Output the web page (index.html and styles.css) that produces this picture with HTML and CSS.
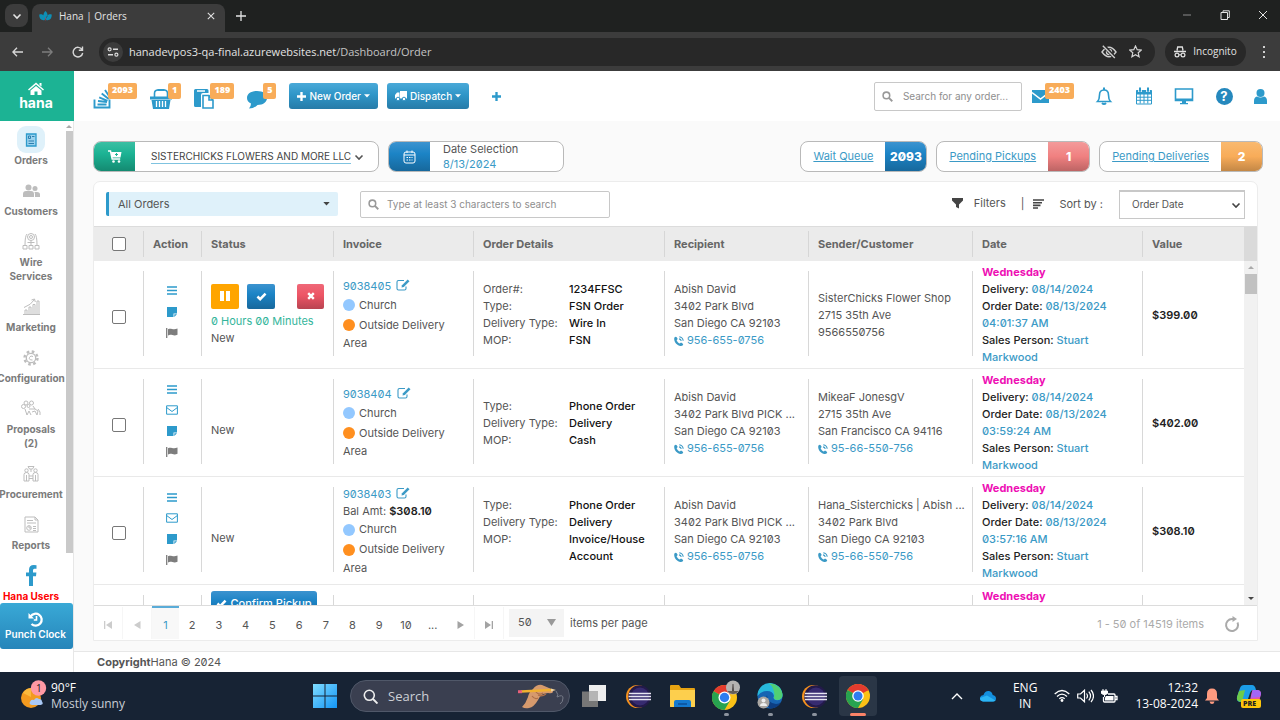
FILE: index.html
```html
<!DOCTYPE html>
<html lang="en">
<head>
<meta charset="utf-8">
<title>Hana | Orders</title>
<link rel="stylesheet" href="styles.css">
</head>
<body>
<svg class="sprite" aria-hidden="true">
  <symbol id="chev" viewBox="0 0 10 10"><path d="M1.500 3.500 5 7l3.500-3.500" fill="none" stroke="currentColor" stroke-width="1.600"/></symbol>
  <symbol id="caret" viewBox="0 0 8 5"><path d="M0 0h8L4 4.500z" fill="currentColor"/></symbol>
  <symbol id="cross" viewBox="0 0 10 10"><path d="M1 1l8 8M9 1 1 9" stroke="currentColor" stroke-width="1.300"/></symbol>
  <symbol id="plus" viewBox="0 0 10 10"><path d="M5 0v10M0 5h10" stroke="currentColor" stroke-width="2.600"/></symbol>
  <symbol id="plus-thin" viewBox="0 0 10 10"><path d="M5 0v10M0 5h10" stroke="currentColor" stroke-width="1.300"/></symbol>
  <symbol id="search" viewBox="0 0 12 12"><circle cx="4.800" cy="4.800" r="3.600" fill="none" stroke="currentColor" stroke-width="1.700"/><path d="M7.500 7.500 11.200 11.200" stroke="currentColor" stroke-width="2"/></symbol>
  <symbol id="check" viewBox="0 0 12 10"><path d="M1.500 5 4.500 8 10.500 1.800" fill="none" stroke="currentColor" stroke-width="2.800"/></symbol>
  <symbol id="times" viewBox="0 0 10 10"><path d="M1.500 1.500l7 7M8.500 1.500l-7 7" stroke="currentColor" stroke-width="3"/></symbol>
  <symbol id="bars" viewBox="0 0 10 9"><path d="M0 1h10M0 4.500h10M0 8h10" stroke="currentColor" stroke-width="1.400"/></symbol>
  <symbol id="note" viewBox="0 0 10 10"><path d="M0 0h10v6.500H6.500V10H0z" fill="currentColor"/><path d="M7.300 10V7.300H10z" fill="currentColor"/></symbol>
  <symbol id="mail-o" viewBox="0 0 12 10"><path d="M.6.800h10.800v8.400H.600zM.6 2.500 6 6.500l5.400-4" fill="none" stroke="currentColor"/></symbol>
  <symbol id="flag" viewBox="0 0 12 10"><path d="M.7 0v10" stroke="currentColor" stroke-width="1.300"/><path d="M2 1.200C5-.4 6.500 2.200 11.500.600v6.200C7 8.600 5.500 5.600 2 7.400z" fill="currentColor"/></symbol>
  <symbol id="edit" viewBox="0 0 14 12"><path d="M8 1.500H2.500Q1 1.500 1 3v6.500Q1 11 2.500 11h6q1.500 0 1.500-1.500V7.500" fill="none" stroke="currentColor" stroke-width="1.100"/><path d="M5.500 8.500 6 6.300 11.700.500l1.800 1.800L7.800 8z" fill="currentColor"/></symbol>
  <symbol id="phone" viewBox="0 0 10 10"><path d="M.4 1.600C2-.2 3 1.200 3.700 3L2.600 4.200C3.300 5.800 4.200 6.800 5.800 7.500L7 6.400c1.800.8 3 1.800 1.500 3.200C5 11.500-1 6.500.4 1.600z" fill="currentColor"/><path d="M5 2.900Q7 3.200 7.200 5M5.300.8Q8.800 1.300 9.200 4.800" fill="none" stroke="currentColor" stroke-width="1.100"/></symbol>
  <symbol id="calendar" viewBox="0 0 18 18"><path d="M1.500 3.500h15v13.500h-15zM1.500 7h15M1.500 10.200h15M1.500 13.300h15M5.200 7v9.500M9 7v9.500M12.800 7v9.500" fill="none" stroke="currentColor"/><path d="M1.500 3v4h15V3z" fill="currentColor"/><path d="M5 1v4M13 1v4" stroke="#fff" stroke-width="3.600"/><path d="M5 .5v4.300M13 .5v4.300" stroke="currentColor" stroke-width="2"/></symbol>
  <symbol id="eclipse" viewBox="0 0 25 25"><circle cx="11.500" cy="12.500" r="11.500" fill="#f5921e"/><circle cx="13.500" cy="12.500" r="11.300" fill="#231a4a"/><circle cx="14" cy="12.500" r="9" fill="#45378a" opacity=".6"/><path d="M3 9.500h22M2.500 12.500h22.500M3 15.500h22" stroke="#e8e6f2" stroke-width="1.700"/></symbol>
  <symbol id="chrome" viewBox="0 0 24 24"><circle cx="12" cy="12" r="12" fill="#fbc116"/><path d="M12 12 1.600 6A12 12 0 0 1 22.400 6z" fill="#e33b2e"/><path d="M12 12 1.600 6A12 12 0 0 0 12 24l5.200-9z" fill="#27a350"/><path d="M12 6.600h10.700l-.3-.6H12z" fill="#e33b2e"/><circle cx="12" cy="12" r="5.800" fill="#fff"/><circle cx="12" cy="12" r="4.500" fill="#2f7cf0"/></symbol>
</svg>

<header class="browser">
  <div class="tabs">
    <button class="tab-menu" aria-label="Search tabs"><svg width="10" height="10"><use href="#chev"/></svg></button>
    <div class="tab">
      <svg width="13" height="11" viewBox="0 0 13 11"><path d="M6.500 0C9.500 3 9 6 6.500 8 4 6 3.500 3 6.500 0zM.3 3.500C4 2.500 6 5 6 9 2.500 10 0 7.500.300 3.500zM12.700 3.500C9 2.500 7 5 7 9c3.500 1 6-1.500 5.700-5.500z" fill="#0e8fb5"/><path d="M6.500 6.500v3" stroke="#c23b50" stroke-width=".6"/></svg>
      <span class="tab-title">Hana | Orders</span>
      <button aria-label="Close tab"><svg width="8" height="8"><use href="#cross"/></svg></button>
    </div>
    <button class="new-tab" aria-label="New tab"><svg width="10" height="10"><use href="#plus-thin"/></svg></button>
    <div class="window-controls">
      <button aria-label="Minimize"><svg width="10" height="10" viewBox="0 0 10 10"><path d="M1 5h8" stroke="#8c8c8c"/></svg></button>
      <button aria-label="Restore"><svg width="10" height="10" viewBox="0 0 10 10"><path d="M1 2.500h6.500V9.500H1zM3 2.500V.800h6.300V7.500H7.500" fill="none" stroke="currentColor"/></svg></button>
      <button aria-label="Close"><svg width="10" height="10" viewBox="0 0 10 10"><path d="M1 1l8 8M9 1 1 9" stroke="currentColor"/></svg></button>
    </div>
  </div>
  <div class="address-row">
    <button aria-label="Back"><svg width="11" height="10" viewBox="0 0 11 10"><path d="M11 5H1M5 .8.900 5 5 9.200" fill="none" stroke="#d8d8d8" stroke-width="1.300"/></svg></button>
    <button aria-label="Forward"><svg width="11" height="10" viewBox="0 0 11 10"><path d="M0 5h10M6 .8 10.100 5 6 9.200" fill="none" stroke="#7d7d7d" stroke-width="1.300"/></svg></button>
    <button aria-label="Reload"><svg width="12" height="12" viewBox="0 0 12 12"><path d="M10 3.500A4.800 4.800 0 1 0 10.700 7M10.500.500V4.200H6.800" fill="none" stroke="#d8d8d8" stroke-width="1.400"/></svg></button>
    <div class="address">
      <span class="site-info"><svg width="12" height="10" viewBox="0 0 12 10"><path d="M6 2.300h5M1 7.700h5" stroke="#ddd" stroke-width="1.400"/><circle cx="2.600" cy="2.300" r="1.500" fill="none" stroke="#ddd" stroke-width="1.200"/><circle cx="9.400" cy="7.700" r="1.500" fill="none" stroke="#ddd" stroke-width="1.200"/></svg></span>
      <span class="url">hanadevpos3-qa-final.azurewebsites.net<i>/Dashboard/Order</i></span>
      <svg width="16" height="14" viewBox="0 0 16 14"><path d="M1 7Q8-2.500 15 7 8 16.500 1 7z" fill="none" stroke="#cfcfcf" stroke-width="1.400"/><circle cx="8" cy="7" r="2.500" fill="none" stroke="#cfcfcf" stroke-width="1.400"/><path d="M2.500.500 14 13" stroke="#282828" stroke-width="3.500"/><path d="M1.800.800 13.800 13" stroke="#cfcfcf" stroke-width="1.400"/></svg>
      <svg width="13" height="13" viewBox="0 0 13 13"><path d="M6.500 1l1.700 3.700 4 .4-3 2.700.9 4L6.500 9.700l-3.600 2.100.9-4-3-2.700 4-.4z" fill="none" stroke="#d4d4d4" stroke-width="1.200"/></svg>
    </div>
    <button class="incognito"><svg width="12" height="12" viewBox="0 0 12 12"><path d="M3 4.500 3.700 1h4.600L9 4.500M0 5.500h12" fill="none" stroke="#e0e0e0" stroke-width="1.300"/><circle cx="3" cy="9" r="1.900" fill="none" stroke="#e0e0e0" stroke-width="1.200"/><circle cx="9" cy="9" r="1.900" fill="none" stroke="#e0e0e0" stroke-width="1.200"/><path d="M5 8.800h2" stroke="#e0e0e0"/></svg>Incognito</button>
    <button class="more" aria-label="Menu"><svg width="4" height="12" viewBox="0 0 4 12"><path d="M1 0h2v2H1zM1 5h2v2H1zM1 10h2v2H1z" fill="#d0d0d0"/></svg></button>
  </div>
</header>

<div class="app">
  <aside class="sidebar">
    <a class="logo" href="#"><svg width="16" height="13" viewBox="0 0 16 13"><path d="M8 .5 16 7.400l-1 1.100L8 2.600 1 8.500 0 7.400z" fill="#fff"/><path d="M11.500 1h2v3.500l-2-1.500zM8 4l5.500 4.600V13H9.500V9.500h-3V13h-4V8.600z" fill="#fff"/></svg>hana</a>
    <div class="nav-wrap">
      <nav class="nav">
        <a class="active" href="#"><span class="ico"><svg width="12" height="14" viewBox="0 0 12 14"><path d="M1.500 1h9.500v12H1.500z" fill="#9ad2ee" stroke="#2d9acb" stroke-width="1.300"/><path d="M3.500 3h2v2.500h-2zM7 3.500h2.500M3.500 8h5.500M3.500 10.500h5.500" fill="none" stroke="#2d7fae"/></svg></span>Orders</a>
        <a href="#"><span class="ico"><svg width="17" height="14" viewBox="0 0 17 14"><g fill="#bdbdbd"><circle cx="5.500" cy="3.500" r="3"/><circle cx="12" cy="4.500" r="2.500"/><path d="M0 13V10q0-3 3-3h5q3 0 3 3v3zM12 13v-3q0-1.200-.6-2H14q3 0 3 2.500V13z"/></g></svg></span>Customers</a>
        <a href="#"><span class="ico"><svg width="18" height="17" viewBox="0 0 18 17"><g fill="none" stroke="#bdbdbd"><circle cx="9" cy="4" r="3.500"/><circle cx="9" cy="4" r="1.500"/><path d="M5 1Q3 3 3 12M13 1q2 2 2 11M9 7.500V12M1 12.500h4v3.500H1zM7 12.500h4v3.500H7zM13 12.500h4v3.500h-4zM5.500 9.500h7"/></g></svg></span>Wire<br>Services</a>
        <a href="#"><span class="ico"><svg width="17" height="17" viewBox="0 0 17 17"><path d="M0 16.500h17M2 16v-4h2v4M6 16V9h2v7M10 16V6.500h2V16M14 16V3h2v13M1 9.500Q8 7 11.500 1.500M8.500 2l3-1 .8 3" fill="none" stroke="#bdbdbd"/></svg></span>Marketing</a>
        <a href="#"><span class="ico"><svg width="16" height="16" viewBox="0 0 16 16"><circle cx="8" cy="8" r="6.500" fill="none" stroke="#bdbdbd" stroke-width="2.400" stroke-dasharray="2.600 2.500"/><circle cx="8" cy="8" r="4.700" fill="none" stroke="#bdbdbd" stroke-width="1.300"/><path d="M10 6.500Q7.500 5 6.500 7.500t3 2.500" fill="none" stroke="#bdbdbd"/></svg></span>Configuration</a>
        <a href="#"><span class="ico"><svg width="20" height="17" viewBox="0 0 20 17"><g fill="none" stroke="#bdbdbd"><circle cx="5" cy="3" r="2"/><circle cx="10.500" cy="3" r="2"/><circle cx="2.500" cy="6.500" r="2"/><circle cx="7.500" cy="6" r="1.500"/><path d="M4 9l2 6 2-4 2 4M8 9h6l3 2-1 4-2-4-3 1M17 9l2 3v3M12 6l2 3"/></g></svg></span>Proposals<br>(2)</a>
        <a href="#"><span class="ico"><svg width="16" height="17" viewBox="0 0 16 17"><g fill="none" stroke="#bdbdbd"><path d="M5 1.500h6L9.500 4h-3zM8 4v3M1 16V9.500q0-2 2.500-2T6 9.500V16zM10 16V9.500q0-2 2.500-2t2.500 2V16zM6 11h4M6 13.500h4M3.500 10v6M12.500 10v6"/><circle cx="3.500" cy="5.500" r="1.700"/><circle cx="12.500" cy="5.500" r="1.700"/></g></svg></span>Procurement</a>
        <a href="#"><span class="ico"><svg width="15" height="17" viewBox="0 0 15 17"><path d="M1 1h10l3 3v12H1zM11 1v3h3M3 4.500h6M3 7h9M9 10.500h3M9 12.500h3M9 14.500h3" fill="none" stroke="#bdbdbd"/><circle cx="5" cy="12" r="2.300" fill="none" stroke="#bdbdbd"/><path d="M5 9.500V12h2" fill="none" stroke="#bdbdbd"/></svg></span>Reports</a>
        <a class="fb" href="#"><span class="ico"><svg width="11" height="21" viewBox="0 0 11 21"><path d="M10.500.200V3.800H8.300Q7 3.800 7 5.300V7.500h3.400L10 11.200H7V21H3V11.200H0V7.500h3V4.800Q3 .1 7.800.100z" fill="#2d9acb"/></svg></span>Hana Users</a>
      </nav>
      <div class="nav-scroll"><span class="up"></span><span class="thumb"></span></div>
    </div>
    <button class="punch"><svg width="16" height="15" viewBox="0 0 16 15"><path d="M2.600 4.500A6 6 0 1 1 3.500 12" fill="none" stroke="#fff" stroke-width="2.300"/><path d="M.5 1v5.500H6z" fill="#fff"/><path d="M8.500 4v4H5.800" fill="none" stroke="#fff" stroke-width="1.600"/></svg>Punch Clock</button>
  </aside>

  <div class="page">
    <div class="topbar">
      <a class="counter" href="#"><svg width="19" height="22" viewBox="0 0 19 22"><path d="M1.500 12.500v8h15v-8M4.500 17.500h9M5 14l9 1M6.200 10.300l8.300 3.500M8.700 6.500l7 5.500M12 3l5 7.500" fill="none" stroke="#2d9acb" stroke-width="1.900"/></svg><b>2093</b></a>
      <a class="counter" href="#"><svg width="22" height="21" viewBox="0 0 22 21"><path d="M4.500 9V5.500Q4.500 2 8 2h6q3.500 0 3.500 3.500V9" fill="none" stroke="#2d9acb" stroke-width="1.600"/><path d="M7.500 1h7v2h-7zM0 8.500h22v3H0zM1.500 12h19L19 21H3z" fill="#2d9acb"/><path d="M6.500 13v6M9.500 13v6M12.500 13v6M15.500 13v6" stroke="#fff" stroke-width="1.300"/></svg><b>1</b></a>
      <a class="counter" href="#"><svg width="20" height="21" viewBox="0 0 20 21"><path d="M0 2.500Q0 1 1.500 1H13q1.500 0 1.500 1.500V5H9Q7 5 7 7v12H1.500Q0 19 0 17.500z" fill="#2d9acb"/><path d="M3 3h8" stroke="#fff" stroke-width="1.500"/><path d="M9 7.500h6l4 4.500v8H9zM15 7.500V12h4" fill="#fff" stroke="#2d9acb" stroke-width="1.600"/></svg><b>189</b></a>
      <a class="counter" href="#"><svg width="20" height="19" viewBox="0 0 20 19"><path d="M10 1c6 0 10 2.800 10 7s-4 7-9.500 7Q7 18.500 2 18.500 4 16.500 4 13.500 0 11.500 0 8c0-4.200 4-7 10-7z" fill="#2d9acb"/></svg><b>5</b></a>
      <button class="btn"><svg width="9" height="9"><use href="#plus"/></svg>New Order<svg width="6" height="4"><use href="#caret"/></svg></button>
      <button class="btn"><svg width="12" height="10" viewBox="0 0 12 10"><path d="M5 0h7v7.500H5zM0 7.500V4l2-2.500h2.500v6z" fill="#fff"/><circle cx="3" cy="8" r="1.800" fill="#fff" stroke="#3192c4"/><circle cx="9" cy="8" r="1.800" fill="#fff" stroke="#3192c4"/></svg>Dispatch<svg width="6" height="4"><use href="#caret"/></svg></button>
      <button class="add" aria-label="Add"><svg width="9" height="9"><use href="#plus"/></svg></button>
      <label class="box-search top-search"><svg width="11" height="11"><use href="#search"/></svg><input type="text" aria-label="Search orders" placeholder="Search for any order..."></label>
      <a class="counter mail" href="#"><svg width="17" height="13" viewBox="0 0 17 13"><path d="M0 0h17v13H0z" fill="#2d9acb"/><path d="M0 2.500 8.500 9 17 2.500" fill="none" stroke="#fff" stroke-width="1.500"/></svg><b>2403</b></a>
      <div class="tools">
        <a href="#" aria-label="Alerts"><svg width="18" height="18" viewBox="0 0 18 18"><path d="M2.500 14.500Q4.500 12.500 4.500 8 4.500 3 9 3t4.500 5q0 4.500 2 6.500z" fill="none" stroke="currentColor" stroke-width="1.600"/><path d="M9 .5V3M7 16q2 2 4 0" stroke="currentColor" stroke-width="2" fill="none"/></svg></a>
        <a href="#" aria-label="Calendar"><svg width="18" height="18"><use href="#calendar"/></svg></a>
        <a href="#" aria-label="Screen"><svg width="20" height="18" viewBox="0 0 20 18"><path d="M1.500 2h17v11.500h-17z" fill="none" stroke="currentColor" stroke-width="1.600"/><path d="M1 11.500h18V14H1zM8 14h4v2h2v1.200H6V16h2z" fill="currentColor"/></svg></a>
        <a class="help" href="#" aria-label="Help">?</a>
        <a href="#" aria-label="Account"><svg width="13" height="15" viewBox="0 0 13 15"><circle cx="6.500" cy="4" r="4" fill="currentColor"/><path d="M0 15v-3q0-4 3-4.500 3.500 2 7 0 3 .5 3 4.500v3z" fill="currentColor"/></svg></a>
      </div>
    </div>

    <main class="content">
      <div class="pills">
        <div class="pill shop"><span class="cap green"><svg width="14" height="13" viewBox="0 0 14 13"><path d="M0 1h2.500l1.700 8h8" fill="none" stroke="#fff" stroke-width="1.500"/><path d="M3 2h10.500L12.500 7.500H4z" fill="#fff"/><path d="M8.500 3v3M7 4.500h3" stroke="#1cb394"/><circle cx="5.500" cy="11.500" r="1.300" fill="#fff"/><circle cx="11" cy="11.500" r="1.300" fill="#fff"/></svg></span><a href="#">SISTERCHICKS FLOWERS AND MORE LLC</a><svg width="10" height="10"><use href="#chev"/></svg></div>
        <div class="pill date"><span class="cap blue"><svg width="13" height="14" viewBox="0 0 13 14"><rect x="1" y="2" width="11" height="11" rx="2" fill="none" stroke="#fff"/><path d="M1 5h11M4 .5V3M9 .5V3" stroke="#fff"/><path d="M3.500 7.500h6M3.500 10h6" stroke="#fff" stroke-dasharray="1.500 1"/></svg></span><div class="date-text"><span>Date Selection</span><a href="#">8/13/2024</a></div></div>
        <div class="pill count wait"><a href="#">Wait Queue</a><b class="blue">2093</b></div>
        <div class="pill count"><a href="#">Pending Pickups</a><b class="red">1</b></div>
        <div class="pill count"><a href="#">Pending Deliveries</a><b class="amber">2</b></div>
      </div>

      <section class="card">
        <div class="filters">
          <div class="select all"><select aria-label="Order view"><option>All Orders</option></select><svg width="7" height="4"><use href="#caret"/></svg></div>
          <label class="box-search list-search"><svg width="11" height="11"><use href="#search"/></svg><input type="text" aria-label="Search list" placeholder="Type at least 3 characters to search"></label>
          <button class="filter"><svg width="11" height="11" viewBox="0 0 11 11"><path d="M0 0h11v2.500L7 6.500v4L4 9V6.500L0 2.500z" fill="#444"/></svg>Filters</button>
          <span class="bar">|</span>
          <svg width="11" height="10" viewBox="0 0 11 10"><path d="M0 1h11M0 3.700h9M0 6.400h7.500M0 9h5" stroke="#444" stroke-width="1.600"/></svg>
          <label class="sort-label" for="sort">Sort by :</label>
          <div class="select sort"><select id="sort"><option>Order Date</option></select><svg width="10" height="10"><use href="#chev"/></svg></div>
        </div>

        <div class="grid">
          <div class="grid-view">
          <table>
            <colgroup><col class="c-check"><col class="c-action"><col class="c-status"><col class="c-invoice"><col class="c-details"><col class="c-recipient"><col class="c-sender"><col class="c-date"><col></colgroup>
            <thead><tr><th><input type="checkbox" aria-label="Select all"></th><th>Action</th><th>Status</th><th>Invoice</th><th>Order Details</th><th>Recipient</th><th>Sender/Customer</th><th>Date</th><th>Value</th></tr></thead>
            <tbody>
              <tr>
                <td><input type="checkbox" aria-label="Select 9038405"></td>
                <td><div class="actions three"><svg width="10" height="9"><use href="#bars"/></svg><svg width="10" height="10"><use href="#note"/></svg><svg class="grey" width="12" height="10"><use href="#flag"/></svg></div></td>
                <td><div class="status-btns"><button class="pause" aria-label="Pause"><svg width="10" height="10" viewBox="0 0 10 10"><path d="M0 0h4v10H0zM6 0h4v10H6z" fill="#fff"/></svg></button><button class="blue" aria-label="Confirm"><svg width="11" height="9"><use href="#check"/></svg></button><button class="cancel" aria-label="Cancel"><svg width="8" height="8"><use href="#times"/></svg></button></div><div class="timer">0 Hours 00 Minutes</div>New</td>
                <td><a href="#">9038405 <svg class="edit" width="14" height="12"><use href="#edit"/></svg></a><div class="tag"><i class="dot sky"></i>Church</div><div class="tag"><i class="dot orange"></i>Outside Delivery</div>Area</td>
                <td><dl><dt>Order#:</dt><dd>1234FFSC</dd><dt>Type:</dt><dd>FSN Order</dd><dt>Delivery Type:</dt><dd>Wire In</dd><dt>MOP:</dt><dd>FSN</dd></dl></td>
                <td>Abish David<br>3402 Park Blvd<br>San Diego CA 92103<br><a href="#"><svg class="phone" width="10" height="10"><use href="#phone"/></svg>956-655-0756</a></td>
                <td>SisterChicks Flower Shop<br>2715 35th Ave<br>9566550756</td>
                <td class="when"><b>Wednesday</b>Delivery: <a href="#">08/14/2024</a><br>Order Date: <a href="#">08/13/2024<br>04:01:37 AM</a><br>Sales Person: <a href="#">Stuart<br>Markwood</a></td>
                <td class="value">$399.00</td>
              </tr>
              <tr>
                <td><input type="checkbox" aria-label="Select 9038404"></td>
                <td><div class="actions"><svg width="10" height="9"><use href="#bars"/></svg><svg width="12" height="10"><use href="#mail-o"/></svg><svg width="10" height="10"><use href="#note"/></svg><svg class="grey" width="12" height="10"><use href="#flag"/></svg></div></td>
                <td class="plain">New</td>
                <td><a href="#">9038404 <svg class="edit" width="14" height="12"><use href="#edit"/></svg></a><div class="tag"><i class="dot sky"></i>Church</div><div class="tag"><i class="dot orange"></i>Outside Delivery</div>Area</td>
                <td><dl><dt>Type:</dt><dd>Phone Order</dd><dt>Delivery Type:</dt><dd>Delivery</dd><dt>MOP:</dt><dd>Cash</dd></dl></td>
                <td>Abish David<br>3402 Park Blvd PICK ...<br>San Diego CA 92103<br><a href="#"><svg class="phone" width="10" height="10"><use href="#phone"/></svg>956-655-0756</a></td>
                <td>MikeaF JonesgV<br>2715 35th Ave<br>San Francisco CA 94116<br><a href="#"><svg class="phone" width="10" height="10"><use href="#phone"/></svg>95-66-550-756</a></td>
                <td class="when"><b>Wednesday</b>Delivery: <a href="#">08/14/2024</a><br>Order Date: <a href="#">08/13/2024<br>03:59:24 AM</a><br>Sales Person: <a href="#">Stuart<br>Markwood</a></td>
                <td class="value">$402.00</td>
              </tr>
              <tr>
                <td><input type="checkbox" aria-label="Select 9038403"></td>
                <td><div class="actions"><svg width="10" height="9"><use href="#bars"/></svg><svg width="12" height="10"><use href="#mail-o"/></svg><svg width="10" height="10"><use href="#note"/></svg><svg class="grey" width="12" height="10"><use href="#flag"/></svg></div></td>
                <td class="plain">New</td>
                <td><a href="#">9038403 <svg class="edit" width="14" height="12"><use href="#edit"/></svg></a><div>Bal Amt: <strong>$308.10</strong></div><div class="tag"><i class="dot sky"></i>Church</div><div class="tag"><i class="dot orange"></i>Outside Delivery</div>Area</td>
                <td><dl><dt>Type:</dt><dd>Phone Order</dd><dt>Delivery Type:</dt><dd>Delivery</dd><dt>MOP:</dt><dd>Invoice/House Account</dd></dl></td>
                <td>Abish David<br>3402 Park Blvd PICK ...<br>San Diego CA 92103<br><a href="#"><svg class="phone" width="10" height="10"><use href="#phone"/></svg>956-655-0756</a></td>
                <td>Hana_Sisterchicks | Abish ...<br>3402 Park Blvd<br>San Diego CA 92103<br><a href="#"><svg class="phone" width="10" height="10"><use href="#phone"/></svg>95-66-550-756</a></td>
                <td class="when"><b>Wednesday</b>Delivery: <a href="#">08/14/2024</a><br>Order Date: <a href="#">08/13/2024<br>03:57:16 AM</a><br>Sales Person: <a href="#">Stuart<br>Markwood</a></td>
                <td class="value">$308.10</td>
              </tr>
              <tr class="next-row">
                <td></td><td></td><td><button class="confirm blue"><svg width="11" height="9"><use href="#check"/></svg>Confirm Pickup</button></td><td></td><td></td><td></td><td></td><td class="when"><b>Wednesday</b></td><td></td>
              </tr>
            </tbody>
          </table>
          </div>
          <div class="grid-scroll"><span class="corner"></span><span class="up"></span><span class="thumb"></span><span class="down"></span></div>
        </div>

        <div class="pager">
          <button class="step" aria-label="First page"><svg width="8" height="8" viewBox="0 0 8 8"><path d="M0 0h1.300v8H0zM8 0v8L2 4z" fill="#ccc"/></svg></button>
          <button class="step" aria-label="Previous page"><svg width="7" height="8" viewBox="0 0 7 8"><path d="M6.500 0v8L0 4z" fill="#ccc"/></svg></button>
          <div class="pages"><button class="current">1</button><button>2</button><button>3</button><button>4</button><button>5</button><button>6</button><button>7</button><button>8</button><button>9</button><button>10</button><button>...</button></div>
          <button class="step" aria-label="Next page"><svg width="7" height="8" viewBox="0 0 7 8"><path d="M.5 0v8L7 4z" fill="#a3a3a3"/></svg></button>
          <button class="step" aria-label="Last page"><svg width="8" height="8" viewBox="0 0 8 8"><path d="M6.700 0H8v8H6.700zM0 0v8l6-4z" fill="#a3a3a3"/></svg></button>
          <div class="select size"><select id="size"><option>50</option></select><svg width="9" height="7" viewBox="0 0 9 7"><path d="M0 0h9L4.500 7z" fill="#999"/></svg></div>
          <label for="size">items per page</label>
          <span class="range">1 - 50 of 14519 items</span>
          <button class="refresh" aria-label="Refresh"><svg width="16" height="17" viewBox="0 0 16 17"><path d="M9.500 3H8a6 6 0 1 0 5.500 3.500" fill="none" stroke="#aaa" stroke-width="2"/><path d="M8.500 0 13 3 8.500 6z" fill="#aaa"/></svg></button>
        </div>
      </section>
    </main>
    <footer class="footer"><b>Copyright</b>Hana © 2024</footer>
  </div>
</div>

<div class="taskbar">
  <div class="weather">
    <svg width="28" height="30" viewBox="0 0 28 30"><circle cx="11" cy="18" r="10" fill="#f39a1f"/><path d="M3 13a10 10 0 0 1 8-5v9z" fill="#fbb93c"/><path d="M12 25q-4-1-1.500-4 1-2 3.500-1 2-3.500 5-1 3-.5 3 2.500 2 3-1.500 3.500z" fill="#a9c8f5"/><circle cx="18.500" cy="8" r="7.700" fill="#ff99a4"/><text x="16" y="12" class="badge-text">1</text></svg>
    <div>90°F<span>Mostly sunny</span></div>
  </div>
  <div class="dock">
    <button aria-label="Start"><svg width="24" height="24" viewBox="0 0 24 24"><defs><linearGradient id="win" x1="0" y1="0" x2="1" y2="1"><stop offset="0" stop-color="#7fdcff"/><stop offset="1" stop-color="#1395f5"/></linearGradient></defs><path d="M0 0h11.500v11.500H0zM12.500 0H24v11.500H12.500zM0 12.500h11.500V24H0zM12.500 12.500H24V24H12.500z" fill="url(#win)"/></svg></button>
    <label class="os-search"><svg width="15" height="15" viewBox="0 0 15 15"><circle cx="6.300" cy="6.300" r="5" fill="none" stroke="#eee" stroke-width="1.600"/><path d="M10 10l4.500 4.500" stroke="#eee" stroke-width="1.900"/></svg><input type="text" aria-label="Search" placeholder="Search"><svg width="46" height="26" viewBox="0 0 46 26"><path d="M4 24Q8 20 10 14q1-5 5-8 4-5 9-4l7 3q4 1 4 4-1 2-5 1l-5 1q-3 2-5 6-4 7-9 8-4 1-7-1z" fill="#d69a6d"/><path d="M17 8q4 5 8 2M20 12q4 2 8-1M14 13q3 4 6 2" fill="none" stroke="#ad6f48" stroke-width="1.200"/><path d="M3 8.500 33 7" stroke="#f0b030" stroke-width="2.500"/><path d="M0 8.700h4" stroke="#e8607a" stroke-width="3"/><path d="M33 5.500 38 7l-5 1.500z" fill="#f0d3a0"/><path d="M38 8q3 4 1 6 6-3 6 1t-3 6" fill="none" stroke="#777c88"/></svg></label>
    <button aria-label="Task view"><svg width="24" height="23" viewBox="0 0 24 23"><path d="M7 0h17v16H7z" fill="#eee"/><path d="M0 6.500h16V22H0z" fill="#777"/><path d="M7 6.500h9V16H7z" fill="#b5b5b5"/></svg></button>
    <button aria-label="Eclipse"><svg width="25" height="25"><use href="#eclipse"/></svg></button>
    <button aria-label="Files"><svg width="25" height="24" viewBox="0 0 25 24"><path d="M0 2Q0 1 1 1h8l2 3h13q1 0 1 1v18H0z" fill="#e6a312"/><path d="M0 6h25v16q0 1-1 1H1q-1 0-1-1z" fill="#fdcf4d"/><path d="M4 23v-5q0-2 2-2h13q2 0 2 2v5z" fill="#1479cf"/><path d="M8 20h9" stroke="#0b4f99" stroke-width="1.500"/></svg></button>
    <button class="running" aria-label="Chrome profile"><svg width="30" height="32" viewBox="0 0 30 32"><use href="#chrome" x="1" y="5" width="25" height="25"/><circle cx="22" cy="7.500" r="7" fill="#b5b3b2"/><path d="M16.500 11h11q-2 3-5.500 3t-5.500-3z" fill="#655e58"/><path d="M21 11l.5-7h1l.5 7z" fill="#514b4a"/></svg></button>
    <button class="running" aria-label="Edge"><svg width="26" height="26" viewBox="0 0 26 26"><circle cx="13" cy="13" r="12.500" fill="#1765b3"/><path d="M.5 13A12.500 12.500 0 0 1 25.500 12q0 6-7 5-3-1-1.500-4-1-5-7-5-6 0-9.500 5z" fill="#27b9dc"/><path d="M12 .6A12.500 12.500 0 0 1 25.500 12q0 5-6 5-4-1-2-4Q17 4 12 .6z" fill="#50cf74"/><path d="M10 12q0 8 9 9 3 0 5-2-3 6.500-11 6.500-7-5-3-13.500z" fill="#0d3e83"/><circle cx="6.500" cy="19.500" r="6" fill="#aaa6a2"/><circle cx="6.500" cy="17.500" r="2" fill="#eee"/><path d="M3 23q0-3 3.500-3t3.500 3z" fill="#eee"/></svg></button>
    <button class="running" aria-label="Eclipse workspace"><svg width="25" height="25"><use href="#eclipse"/></svg></button>
    <button class="open" aria-label="Chrome"><svg width="24" height="24"><use href="#chrome"/></svg></button>
  </div>
  <div class="tray">
    <svg width="12" height="12" viewBox="0 0 12 12"><path d="M1 9l5-5 5 5" fill="none" stroke="#fff" stroke-width="1.400"/></svg>
    <svg width="16" height="12" viewBox="0 0 16 12"><path d="M3 11.500Q-.5 11-.1 8 .5 5 3.500 5 5 .5 9 1q3 .5 3.700 4Q16 5.500 16 8.500q0 3-3 3z" fill="#1490df"/><path d="M3 11.500Q0 11 .100 8L7 5.500l8.500 5q-1 1-2.500 1z" fill="#2cb5f4"/></svg>
    <div class="lang">ENG<br>IN</div>
    <div class="system">
      <svg width="16" height="13" viewBox="0 0 16 13"><path d="M.7 5Q8-2 15.300 5M3 7.500Q8 2.800 13 7.500M5.300 9.800Q8 7.500 10.700 9.800" fill="none" stroke="#fff" stroke-width="1.300"/><circle cx="8" cy="11.500" r="1.400" fill="#fff"/></svg>
      <svg width="17" height="14" viewBox="0 0 17 14"><path d="M.7 5H3.500L7.500 1.200v11.600L3.500 9H.700zM9.500 4.500q2 2.500 0 5M11.800 2.700q3.500 4.300 0 8.600M14 1q5 6 0 12" fill="none" stroke="#fff" stroke-width="1.200"/></svg>
      <svg width="17" height="15" viewBox="0 0 17 15"><path d="M2.500 8v4q0 1 1 1H13q1 0 1-1V6q0-1-1-1H7M14.500 7.500H16v3h-1.500" fill="none" stroke="#fff" stroke-width="1.300"/><path d="M5 7h7.500v4.500H4V8.500z" fill="#fff"/><path d="M2 0v2M5 0v2M.5 2h6v2.500Q3.500 7 .5 4.500zM3.500 5.500V8" fill="#fff" stroke="#fff"/></svg>
    </div>
    <div class="clock">12:32<br>13-08-2024</div>
    <svg width="14" height="16" viewBox="0 0 14 16"><path d="M0 12.500 2 10V6q0-5.500 5-5.500T12 6v4l2 2.500zM4.500 13.500h5Q9 16 7 16t-2.500-2.500z" fill="#ff9b80"/></svg>
    <svg width="26" height="26" viewBox="0 0 26 26"><path d="M8 2h8q3 0 4 5h-3q-2 0-3 3l-3 9H5q-5 0-4-5L4 5q1-3 4-3z" fill="#1b9de8"/><path d="M3 8l6-1-3 12q-6 0-5-5z" fill="#6ecb49"/><path d="M17 7h4q4 0 4 4l-2 8q-1 3-4 3h-9q3-1 4-5l1.500-7Q16 7 17 7z" fill="#e455a7"/><path d="M17 7h4q4 0 4 4l-1 3-9 1 1-5q0-3 1-3z" fill="#a366f5"/><rect x="5" y="16" width="20" height="9" rx="2" fill="#fdc60b"/><text x="7" y="23" class="pre">PRE</text></svg>
  </div>
</div>
</body>
</html>
```

FILE: styles.css
```css
* { box-sizing: border-box; }
body {
  margin: 0;
  height: 100vh;
  display: flex;
  flex-direction: column;
  overflow: hidden;
  font: 11px/17px Inter, "Liberation Sans", sans-serif;
  font-feature-settings: "zero";
  color: #555;
  background: #fafafa;
}
button, input, select { font: inherit; color: inherit; font-feature-settings: inherit; }
button { border: 0; padding: 0; background: none; display: flex; align-items: center; justify-content: center; }
a { color: #3b9ac6; text-decoration: none; }
svg { flex: none; display: block; }
.sprite { position: absolute; width: 0; height: 0; }

/* Browser frame */
.browser { flex: none; font-family: "Open Sans", sans-serif; font-size: 10px; font-feature-settings: normal; color: #e3e3e3; background: #3c3c3c; }
.tabs { height: 32px; display: flex; align-items: flex-start; background: #1f2120; }
.tab-menu { width: 23px; height: 23px; margin: 4px 4px 4px 5px; border-radius: 8px; background: #3c3c3c; }
.tab { width: 193px; height: 28px; margin-top: 4px; padding: 0 10px 4px 7px; display: flex; align-items: center; gap: 7px; border-radius: 8px 8px 0 0; background: #3c3c3c; }
.tab-title { flex: 1; }
.new-tab { width: 32px; height: 31px; }
.window-controls { margin-left: auto; padding-right: 12px; height: 30px; display: flex; gap: 28px; }
.address-row { height: 39px; display: flex; align-items: center; padding: 0 14px 0 12px; gap: 19px; }
.address { flex: 1; height: 28px; margin-left: -4px; margin-right: -9px; padding: 0 13px 0 4px; display: flex; align-items: center; gap: 12px; border-radius: 14px; background: #282828; }
.site-info { width: 20px; height: 20px; margin-right: -6px; border-radius: 10px; background: #3c3c3c; display: flex; align-items: center; justify-content: center; }
.url { flex: 1; font-size: 11px; }
.url i { font-style: normal; color: #c4c4c4; }
.incognito { width: 81px; height: 28px; gap: 7px; margin-right: -3px; border-radius: 14px; background: #282828; }

/* Shell */
.app { flex: 1; min-height: 0; display: flex; }
.sidebar { width: 74px; flex: none; display: flex; flex-direction: column; background: #fff; border-right: 1px solid #e7e7e7; }
.logo { height: 50px; display: flex; flex-direction: column; align-items: center; justify-content: center; background: #1cb394; color: #fff; font: bold 14px/15px Inter, sans-serif; margin-right: -1px; padding-right: 2px; }
.nav-wrap { flex: 1; min-height: 0; display: flex; overflow: hidden; }
.nav { flex: 1; min-width: 0; padding: 5px 0 0; display: flex; flex-direction: column; gap: 9px; overflow: hidden; }
.nav a { display: flex; flex-direction: column; align-items: center; flex: none; width: 62px; text-align: center; font-weight: 700; font-size: 10px; line-height: 14px; color: #7b7b7b; }
.ico { width: 28px; height: 27px; display: flex; align-items: center; justify-content: center; border-radius: 9px; margin-bottom: 0; }
.nav a { padding-bottom: 1px; }
.active .ico { background: #dff1fa; }
.nav .fb { color: #f00; white-space: nowrap; }
.nav-scroll { width: 8px; display: flex; flex-direction: column; align-items: center; padding-top: 4px; gap: 3px; }
.nav-scroll .thumb { width: 7px; height: 422px; background: #c9c9c9; }
.up { border: 3px solid transparent; border-top: 0; border-bottom-color: #aaa; }
.down { border: 3px solid transparent; border-bottom: 0; border-top-color: #444; }
.punch { height: 46px; margin-bottom: 23px; padding-right: 2px; flex-direction: column; border-radius: 3px; color: #fff; font-size: 10px; font-weight: 600; line-height: 14px; background: linear-gradient(#39a9d6, #2685ba); }
.page { flex: 1; min-width: 0; display: flex; flex-direction: column; }

/* Top bar */
.topbar { height: 50px; flex: none; display: flex; align-items: center; padding: 0 13px 0 19px; background: #fff; }
.counter { display: flex; align-items: flex-end; height: 26px; margin-right: 13px; }
.counter b { align-self: flex-start; margin-left: -4px; padding: 0 4px; height: 16px; border-radius: 2px; background: #f8ac59; color: #fff; font: 800 9px/13px "Open Sans", sans-serif; }
.btn { height: 26px; padding: 0 8px; margin-right: 9px; gap: 3px; border-radius: 3px; color: #fff; font-size: 10px; font-weight: 500; background: linear-gradient(#4aa9d8, #2f96c8 45%, #267ba8); }
.add { width: 36px; color: #2d9acb; }
.box-search { display: flex; align-items: center; border: 1px solid #c8c8c8; border-radius: 2px; background: #fff; color: #999; }
.box-search input { flex: 1; min-width: 0; border: 0; padding: 0; outline: 0; background: none; color: #555; font-size: 10px; }
.box-search input::placeholder { color: #8e8e8e; opacity: 1; }
.top-search { width: 148px; height: 29px; padding: 0 7px; gap: 10px; margin-left: auto; }
.mail { margin: 0 21px 0 10px; }
.mail svg { margin-bottom: 6px; }
.tools { width: 172px; display: flex; justify-content: space-between; align-items: center; color: #2d9acb; }
.tools a { color: #2d9acb; }
.tools .help { width: 17px; height: 17px; border-radius: 9px; text-align: center; font-size: 13px; font-weight: 700; color: #fff; background: #2588bd; }

/* Summary pills */
.content { flex: 1; min-height: 0; padding: 20px 17px 10px 19px; display: flex; flex-direction: column; gap: 9px; }
.pills { display: flex; gap: 9px; }
.pill { height: 31px; display: flex; align-items: center; border: 1px solid #b9b9b9; border-radius: 8px; background: #fff; overflow: hidden; }
.cap { width: 41px; height: 100%; display: flex; align-items: center; justify-content: center; }
.green { background: linear-gradient(#3abfa3, #1cb394 40%, #148a71); }
.blue { background: linear-gradient(#3c93cf, #1c84c6 40%, #17689c); }
.red { background: linear-gradient(#f39a9a, #f08080 50%, #bd6464); }
.amber { background: linear-gradient(#f9b96f, #f8ac59 50%, #c38746); }
.shop { width: 286px; }
.shop a { margin: 0 3px 0 16px; font: 10px/13px Inter, sans-serif; color: #444; border-bottom: 1px solid #7fc3e0; white-space: nowrap; }
.date { width: 176px; }
.date-text { margin-left: 13px; display: flex; flex-direction: column; line-height: 15px; }
.count a { padding: 0 12px; text-decoration: underline; }
.count b { min-width: 41px; height: 100%; padding: 0 4px; color: #fff; font-size: 12px; font-weight: 800; line-height: 29px; text-align: center; }
.wait { margin-left: auto; }

/* Orders card */
.card { flex: 1; min-height: 0; margin-right: 5px; display: flex; flex-direction: column; border: 1px solid #ececec; border-radius: 7px 7px 0 0; background: #fff; overflow: hidden; }
.filters { height: 44px; flex: none; display: flex; align-items: center; padding: 0 12px; }
.select { position: relative; display: flex; align-items: center; }
.select select { appearance: none; width: 100%; height: 100%; border: 0; border-radius: 0; background: none; outline: 0; padding: 0 20px 0 9px; }
.select svg { position: absolute; right: 8px; pointer-events: none; color: #444; }
.all { width: 232px; height: 24px; background: #dff1fa; border-left: 3px solid #2d9acb; border-radius: 2px; }
.list-search { width: 250px; height: 27px; padding: 0 7px; gap: 8px; margin-left: 22px; }
.filter { margin-left: auto; gap: 11px; padding-bottom: 2px; }
.bar { margin: 0 9px 0 15px; }
.sort-label { margin: 0 16px 0 15px; }
.sort { width: 126px; height: 29px; border: 1px solid #c8c8c8; border-top-width: 2px; }
.sort select { padding-left: 12px; font-size: 10px; }
.sort svg { right: 3px; }

.grid { flex: 1; min-height: 0; display: flex; border-top: 1px solid #dcdcdc; border-bottom: 1px solid #dcdcdc; }
.grid-view { flex: 1; min-width: 0; overflow: hidden; }
table { width: 100%; table-layout: fixed; border-collapse: separate; border-spacing: 0; }
.c-check { width: 49px; }
.c-action { width: 58px; }
.c-status { width: 132px; }
.c-invoice { width: 140px; }
.c-details { width: 191px; }
.c-recipient { width: 144px; }
.c-sender { width: 164px; }
.c-date { width: 170px; }
th { height: 34px; padding: 0 10px; text-align: left; font-weight: 700; color: #666; background: linear-gradient(#d6d6d6, #d6d6d6) no-repeat 0 50% / 1px 26px #ebebeb; }
td { height: 108px; padding: 3px 0 2px 10px; vertical-align: middle; border-bottom: 1px solid #e9e9e9; background: linear-gradient(#d8d8d8, #d8d8d8) no-repeat 0 10px / 1px calc(100% - 22px); white-space: nowrap; }
th:first-child, td:first-child { padding-left: 18px; background-image: none; }
td:first-child { padding-top: 7px; }
input[type="checkbox"] { appearance: none; display: block; width: 14px; height: 14px; margin: 0; border: 1px solid #777; border-radius: 2px; background: #fff; }
.actions { display: flex; flex-direction: column; align-items: center; justify-content: space-between; height: 76px; padding: 0 10px 4px 0; color: #2d9acb; }
.three { height: 58px; padding-bottom: 6px; }
.grey { color: #7d7d7d; }
.status-btns { display: flex; gap: 8px; margin-bottom: 4px; }
.status-btns button { width: 28px; height: 25px; border-radius: 2px; color: #fff; }
.status-btns .pause { background: #ffa500; }
.status-btns .cancel { width: 27px; margin-left: 14px; background: linear-gradient(#ef6878, #ed5565 45%, #b94451); }
.timer { color: #33b59b; }
.plain { padding-top: 18px; }
.edit, .phone { display: inline-block; }
.edit { margin-left: 2px; vertical-align: -1px; }
.phone { margin-right: 3px; vertical-align: -2px; }
.tag { display: flex; align-items: center; gap: 4px; height: 20px; }
.dot { width: 12px; height: 12px; border-radius: 6px; }
.sky { background: #93c8ff; }
.orange { background: #ff8f1f; }
dl { margin: 0; display: grid; grid-template-columns: 86px 1fr; }
dd { margin: 0; color: #111; font-weight: 500; white-space: normal; }
strong { font-weight: 600; color: #222; }
.when { color: #222; font-weight: 500; }
.when b { display: block; color: #ee0fb4; font-weight: 700; }
.value { font-weight: 600; color: #222; }
.next-row td { vertical-align: top; }
.confirm { width: 106px; height: 25px; margin-top: 3px; gap: 3px; border-radius: 3px; color: #fff; font-weight: 500; }
.grid-scroll { width: 13px; display: flex; flex-direction: column; align-items: center; background: #f1f1f1; }
.corner { width: 100%; height: 34px; margin-bottom: 5px; background: #dadada; }
.grid-scroll .thumb { width: 12px; height: 20px; margin-top: 5px; background: #c1c1c1; }
.grid-scroll .down { margin: auto 0 5px; }

/* Pager */
.pager { height: 34px; flex: none; display: flex; align-items: center; padding-right: 17px; }
.step { width: 29px; height: 32px; padding-top: 4px; border-right: 1px solid #f6f6f6; color: #aaa; }
.pages { width: 294px; height: 100%; display: flex; }
.pages button { flex: 1; height: 33px; padding-top: 5px; }
.pages .current { border-top: 2px solid #5aacd8; padding-top: 3px; background: #f8f8f8; color: #3b9ac6; }
.size { width: 55px; height: 28px; margin: 0 6px 1px 5px; background: #f4f4f4; }
.range { margin-left: auto; margin-right: 20px; padding-top: 2px; color: #aaa; }
.refresh { padding-top: 3px; }
.footer { height: 21px; flex: none; padding: 2px 23px; background: #fff; border-top: 1px solid #e7e7e7; }

/* Desktop taskbar */
.taskbar { height: 48px; flex: none; display: flex; align-items: center; background: #172334; color: #fff; font: 12px/16px "Open Sans", sans-serif; font-feature-settings: normal; }
.weather { width: 313px; padding-left: 20px; display: flex; gap: 3px; }
.weather span { display: block; color: #c9ced6; }
.badge-text { font: 10px "Open Sans", sans-serif; fill: #222; }
.pre { font: 800 7px "Open Sans", sans-serif; fill: #222; }
.dock { height: 100%; display: flex; align-items: center; gap: 6px; }
.dock button { position: relative; width: 38px; height: 40px; border-radius: 4px; }
.dock button:first-child { width: 24px; }
.os-search { width: 220px; height: 32px; margin: 0 -1px 0 7px; padding: 0 5px 0 12px; display: flex; align-items: center; gap: 10px; border: 1px solid #505869; border-radius: 16px; background: #3a3f50; }
.os-search input { flex: 1; min-width: 0; border: 0; padding: 0; outline: 0; background: none; font-size: 13px; }
.os-search input::placeholder { color: #cdd0d6; opacity: 1; }
.dock .open { background: #2a3646; }
.running::after, .open::after { content: ""; position: absolute; bottom: 0; width: 5px; height: 3px; border-radius: 2px; background: #8c939e; }
.open::after { width: 16px; background: #fb8368; }
.tray { margin-left: auto; padding-right: 18px; display: flex; align-items: center; gap: 17px; }
.lang { text-align: center; }
.system { display: flex; gap: 7px; }
.clock { text-align: right; margin-right: -10px; }
```
